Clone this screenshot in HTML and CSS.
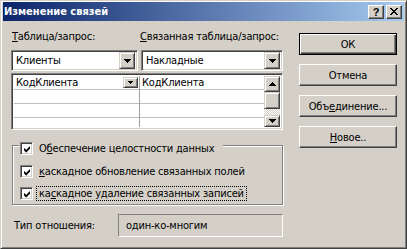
FILE: index.html
```html
<!DOCTYPE html>
<html lang="ru">
<head>
<meta charset="utf-8">
<title>Изменение связей</title>
<link rel="stylesheet" href="styles.css">
</head>
<body>
<div class="window">
  <div class="titlebar">
    <span class="title">Изменение связей</span>
    <div class="tbtns">
      <span class="tbtn help">?</span>
      <span class="tbtn close"><svg width="8" height="7" viewBox="0 0 8 7"><path d="M0 0h2v1H0zM6 0h2v1H6zM1 1h2v1H1zM5 1h2v1H5zM2 2h4v1H2zM3 3h2v1H3zM2 4h4v1H2zM1 5h2v1H1zM5 5h2v1H5zM0 6h2v1H0zM6 6h2v1H6z" fill="#000"/></svg></span>
    </div>
  </div>
  <div class="content">
    <div class="left">
      <div class="labels">
        <span class="lab1"><u>Т</u>аблица/запрос:</span>
        <span class="lab2"><u>С</u>вязанная таблица/запрос:</span>
      </div>
      <div class="combos">
        <div class="combo c1"><span class="val">Клиенты</span><span class="dd"><svg width="7" height="4" viewBox="0 0 7 4"><path d="M0 0h7v1H0zM1 1h5v1H1zM2 2h3v1H2zM3 3h1v1H3z" fill="#000"/></svg></span></div>
        <div class="combo c2"><span class="val">Накладные</span><span class="dd"><svg width="7" height="4" viewBox="0 0 7 4"><path d="M0 0h7v1H0zM1 1h5v1H1zM2 2h3v1H2zM3 3h1v1H3z" fill="#000"/></svg></span></div>
      </div>
      <div class="grid">
        <div class="cols">
          <div class="col colA">
            <div class="row"><span class="cell">КодКлиента</span><span class="mini"><svg width="5" height="3" viewBox="0 0 5 3"><path d="M0 0h5v1H0zM1 1h3v1H1zM2 2h1v1H2z" fill="#000"/></svg></span></div>
            <div class="row"></div>
            <div class="row"></div>
            <div class="row last"></div>
          </div>
          <div class="col colB">
            <div class="row"><span class="cell">КодКлиента</span></div>
            <div class="row"></div>
            <div class="row"></div>
            <div class="row last"></div>
          </div>
        </div>
        <div class="scroll">
          <span class="sbtn up"><svg width="7" height="4" viewBox="0 0 7 4"><path d="M3 0h1v1H3zM2 1h3v1H2zM1 2h5v1H1zM0 3h7v1H0z" fill="#000"/></svg></span>
          <span class="thumb"></span>
          <span class="track"></span>
          <span class="sbtn down"><svg width="7" height="4" viewBox="0 0 7 4"><path d="M0 0h7v1H0zM1 1h5v1H1zM2 2h3v1H2zM3 3h1v1H3z" fill="#000"/></svg></span>
        </div>
      </div>
      <fieldset class="group">
        <legend class="legend">
          <span class="chk"><span class="box"><svg width="7" height="7" viewBox="0 0 7 7"><path d="M6 0h1v1H6zM5 1h2v1H5zM0 2h1v1H0zM4 2h3v1H4zM0 3h2v1H0zM3 3h3v1H3zM0 4h5v1H0zM1 5h3v1H1zM2 6h1v1H2z" fill="#000"/></svg></span><span class="text">О<u>б</u>еспечение целостности данных</span></span>
        </legend>
        <div class="chk row2"><span class="box"><svg width="7" height="7" viewBox="0 0 7 7"><path d="M6 0h1v1H6zM5 1h2v1H5zM0 2h1v1H0zM4 2h3v1H4zM0 3h2v1H0zM3 3h3v1H3zM0 4h5v1H0zM1 5h3v1H1zM2 6h1v1H2z" fill="#000"/></svg></span><span class="text"><u>к</u>аскадное обновление связанных полей</span></div>
        <div class="chk row3"><span class="box"><svg width="7" height="7" viewBox="0 0 7 7"><path d="M6 0h1v1H6zM5 1h2v1H5zM0 2h1v1H0zM4 2h3v1H4zM0 3h2v1H0zM3 3h3v1H3zM0 4h5v1H0zM1 5h3v1H1zM2 6h1v1H2z" fill="#000"/></svg></span><span class="text focus">ка<u>с</u>кадное удаление связанных записей</span></div>
      </fieldset>
      <div class="rel">
        <span class="rellab">Тип отношения:</span>
        <div class="relval">один-ко-многим</div>
      </div>
    </div>
    <div class="buttons">
      <div class="btn default">ОК</div>
      <div class="btn">Отмена</div>
      <div class="btn">Объ<u>е</u>динение...</div>
      <div class="btn"><u>Н</u>овое..</div>
    </div>
  </div>
</div>
</body>
</html>
```
FILE: styles.css
```css
* { box-sizing: border-box; }
html, body { margin: 0; padding: 0; background: #d4d0c8; }
body { font-family: "DejaVu Sans Condensed", "DejaVu Sans", "Liberation Sans", sans-serif; font-size: 11px; letter-spacing: -0.2px; color: #000; }
u { text-decoration: underline; text-underline-offset: 1px; }

.window {
  width: 407px; height: 249px; background: #d4d0c8;
  border: 1px solid; border-color: #d4d0c8 #404040 #404040 #d4d0c8;
  box-shadow: inset 1px 1px #fff, inset -1px -1px #808080;
  padding: 1px 2px 2px 2px;
}
.titlebar {
  height: 19px;
  background: linear-gradient(to right, #0a246a, #a6caf0);
  display: flex; align-items: center; justify-content: space-between;
  padding: 0 2px 0 1px;
}
.title { color: #fff; font-weight: bold; font-size: 11px; letter-spacing: 0; }
.tbtns { display: flex; gap: 2px; }
.tbtn {
  width: 16px; height: 14px; background: #d4d0c8;
  border: 1px solid; border-color: #fff #404040 #404040 #fff;
  box-shadow: inset -1px -1px #808080;
  display: flex; align-items: center; justify-content: center;
  font-family: "Liberation Sans", sans-serif;
  font-weight: bold; font-size: 11px; line-height: 12px;
}

.content { display: flex; padding: 9px 0 0 8px; }
.left { width: 272px; }
.labels { display: flex; height: 14px; line-height: 14px; white-space: nowrap; }
.lab1 { width: 129px; padding-left: 1px; }

.combos { display: flex; gap: 3px; margin-top: 6px; }
.combo {
  height: 21px; background: #fff;
  border: 1px solid; border-color: #808080 #fff #fff #808080;
  box-shadow: inset 1px 1px #404040, inset -1px -1px #d4d0c8;
  display: flex; align-items: center; justify-content: space-between;
  padding: 2px;
}
.c1 { width: 127px; }
.c2 { width: 142px; }
.val { padding-left: 2px; }
.dd, .sbtn, .thumb, .mini {
  background: #d4d0c8;
  border: 1px solid; border-color: #d4d0c8 #404040 #404040 #d4d0c8;
  box-shadow: inset 1px 1px #fff, inset -1px -1px #808080;
  display: flex; align-items: center; justify-content: center;
}
.dd { width: 16px; height: 17px; }

.grid {
  margin-top: 2px; height: 57px; background: #fff;
  border: 1px solid; border-color: #808080 #fff #fff #808080;
  box-shadow: inset 1px 1px #404040, inset -1px -1px #d4d0c8;
  padding: 2px; display: flex;
}
.cols { flex: 1; display: flex; }
.colA { width: 126px; border-right: 1px solid #a0a0a0; }
.colB { flex: 1; }
.row {
  height: 14px; border-bottom: 1px solid #c0c0c0;
  display: flex; align-items: center; justify-content: space-between;
  padding-left: 2px;
}
.row.last { border-bottom: 0; }
.mini { width: 15px; height: 11px; margin-right: 1px; }
.scroll { width: 16px; display: flex; flex-direction: column; }
.sbtn.up { height: 16px; }
.thumb { height: 17px; }
.track {
  flex: 1;
  background-image: repeating-conic-gradient(#fff 0 25%, #d4d0c8 0 50%);
  background-size: 2px 2px;
}
.sbtn.down { height: 12px; }

.group {
  margin: 5px 0 0 1px; width: 271px;
  border: 1px solid #808080;
  box-shadow: inset 1px 1px #fff, 1px 1px #fff;
  padding: 0 6px 3px 6px;
}
.legend { padding: 5px 6px 0 1px; background: #d4d0c8; }
.chk { display: flex; align-items: center; height: 16px; white-space: nowrap; }
.row2 { margin-top: 7px; margin-left: 1px; }
.row3 { margin-top: 6px; margin-left: 1px; }
.box {
  width: 13px; height: 13px; background: #fff;
  border: 1px solid; border-color: #808080 #fff #fff #808080;
  box-shadow: inset 1px 1px #404040, inset -1px -1px #d4d0c8;
  padding: 2px; display: flex; margin-right: 3px; flex: none;
}
.box svg { margin: 1px 0 0 1px; }
.text { border: 1px dotted transparent; padding: 0 2px; line-height: 13px; }
.text.focus { border-color: #000; }

.rel { display: flex; align-items: center; margin-top: 9px; padding-left: 3px; }
.rellab { width: 104px; }
.relval {
  width: 165px; height: 23px;
  border: 1px solid; border-color: #808080 #fff #fff #808080;
  padding-left: 7px; display: flex; align-items: center;
}

.buttons { margin-left: 16px; margin-top: 3px; width: 98px; display: flex; flex-direction: column; gap: 9px; }
.btn {
  height: 22px; background: #d4d0c8;
  border: 1px solid; border-color: #fff #404040 #404040 #fff;
  box-shadow: inset -1px -1px #808080;
  display: flex; align-items: center; justify-content: center;
}
.btn.default {
  border: 1px solid #000;
  box-shadow: inset 1px 1px #fff, inset -1px -1px #404040, inset -2px -2px #808080;
}
```
